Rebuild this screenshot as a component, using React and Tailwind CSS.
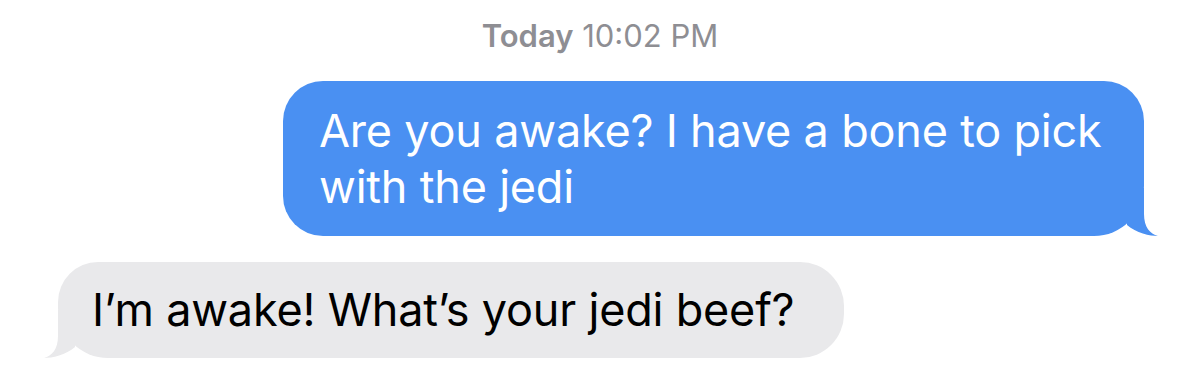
export default function App() {
  return (
    <div className="w-[1200px] h-[374px] bg-white overflow-hidden flex flex-col" style={{ fontFamily: 'Inter, "Noto Sans", sans-serif' }}>
      <div className="pt-[18px] h-[60px] text-center text-[31px] leading-[36px] text-[#8e8e93]">
        <span className="font-semibold">Today</span> <span>10:02 PM</span>
      </div>
      <div className="mt-[21px] self-end mr-[56px] relative">
        <div className="w-[861px] h-[155px] bg-[#4a90f2] text-white rounded-tl-[40px] rounded-tr-[40px] rounded-bl-[40px] rounded-br-[50px] pl-[36px] pr-[20px] pt-[22px] text-[45px] leading-[56px] tracking-[-0.2px]">
          Are you awake? I have a bone to pick with the jedi
        </div>
        <svg className="absolute right-[-14px] bottom-0" width="48" height="48" viewBox="-34 -48 48 48">
          <path d="M0 -48 L0 -22 C0 -9 6 -2 14 0 C6 0 -8 -3 -17 -11 L-17 -48 Z" fill="#4a90f2" />
        </svg>
      </div>
      <div className="mt-[26px] ml-[58px] relative self-start">
        <div className="w-[786px] h-[96px] bg-[#e9e9eb] text-black rounded-tl-[40px] rounded-tr-[44px] rounded-br-[44px] rounded-bl-[50px] pl-[34px] pt-[20px] text-[45px] leading-[56px] tracking-[-0.2px]">
          I’m awake! What’s your jedi beef?
        </div>
        <svg className="absolute left-[-14px] bottom-0" width="48" height="48" viewBox="-14 -48 48 48">
          <path d="M0 -48 L0 -22 C0 -9 -6 -2 -14 0 C-6 0 8 -3 17 -11 L17 -48 Z" fill="#e9e9eb" />
        </svg>
      </div>
    </div>
  );
}
